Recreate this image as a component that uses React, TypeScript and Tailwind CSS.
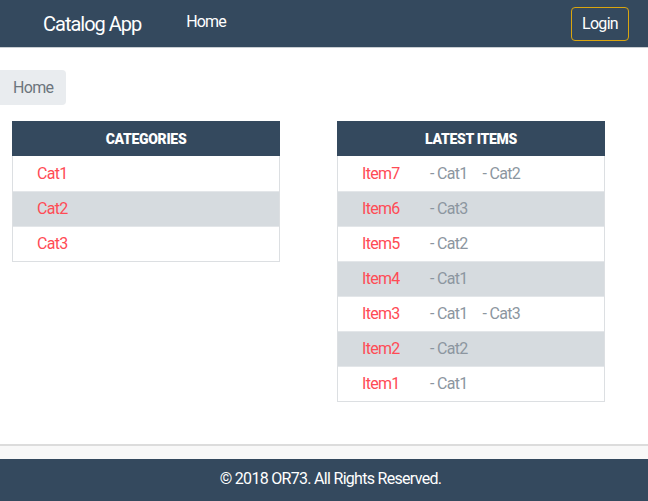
import React from 'react'

const categories = ['Cat1', 'Cat2', 'Cat3']

const items = [
  { name: 'Item7', cats: ['Cat1', 'Cat2'] },
  { name: 'Item6', cats: ['Cat3'] },
  { name: 'Item5', cats: ['Cat2'] },
  { name: 'Item4', cats: ['Cat1'] },
  { name: 'Item3', cats: ['Cat1', 'Cat3'] },
  { name: 'Item2', cats: ['Cat2'] },
  { name: 'Item1', cats: ['Cat1'] },
]

function Panel({ title, children }: { title: string; children: React.ReactNode }) {
  return (
    <div className="w-[268px] border border-[#dcdfe2]">
      <div className="h-[35px] -mx-px -mt-px pt-[1px] bg-[#34495e] flex items-center justify-center text-white text-[14px] font-black tracking-[-0.3px] uppercase">
        {title}
      </div>
      {children}
    </div>
  )
}

export default function App() {
  return (
    <div className="min-h-[501px] flex flex-col bg-white font-['Roboto',sans-serif] tracking-[-0.7px]">
      {/* Navbar */}
      <header className="h-[48px] bg-[#34495e] border-b border-[#c9ced3] flex items-center pl-[43px] pr-[19px]">
        <span className="text-white text-[20px] leading-none tracking-[-1px]">Catalog App</span>
        <span className="text-white text-[16px] ml-[45px] -mt-[3px] tracking-[-0.9px]">Home</span>
        <button className="ml-auto h-[34px] w-[58px] rounded-[4px] border border-[#d9a50f] text-white text-[16px]">
          Login
        </button>
      </header>

      {/* Main */}
      <main className="flex-1">
        <div className="mt-[22px] inline-flex h-[35px] w-[66px] items-center px-[13px] bg-[#e9ecef] rounded-r-[4px] text-[#6c757d] text-[16px]">
          Home
        </div>

        <div className="flex items-start gap-[57px] pl-[12px] mt-[16px]">
          <Panel title="Categories">
            {categories.map((c, i) => (
              <div
                key={c}
                className={`h-[35px] flex items-center pl-[24px] text-[16px] text-[#ff4b55] ${i % 2 === 1 ? 'bg-[#d6dbdf]' : 'bg-white'} ${i > 0 ? 'border-t border-[#e3e6e9]' : ''}`}
              >
                {c}
              </div>
            ))}
          </Panel>

          <Panel title="Latest Items">
            {items.map((it, i) => (
              <div
                key={it.name}
                className={`h-[35px] flex items-center pl-[24px] text-[16px] ${i % 2 === 1 ? 'bg-[#d6dbdf]' : 'bg-white'} ${i > 0 ? 'border-t border-[#e3e6e9]' : ''}`}
              >
                <span className="w-[68px] text-[#ff4b55]">{it.name}</span>
                {it.cats.map((c) => (
                  <span key={c} className="text-[#8c96a0] mr-[15px]">- {c}</span>
                ))}
              </div>
            ))}
          </Panel>
        </div>
      </main>

      {/* Footer */}
      <div className="mt-[42px] h-[15px] bg-[#f8f8f8] border-t-2 border-[#dcdcdc]" />
      <footer className="h-[42px] pl-[13px] pb-[2px] bg-[#34495e] flex items-center justify-center text-white text-[16px]">
        © 2018 OR73. All Rights Reserved.
      </footer>
    </div>
  )
}
